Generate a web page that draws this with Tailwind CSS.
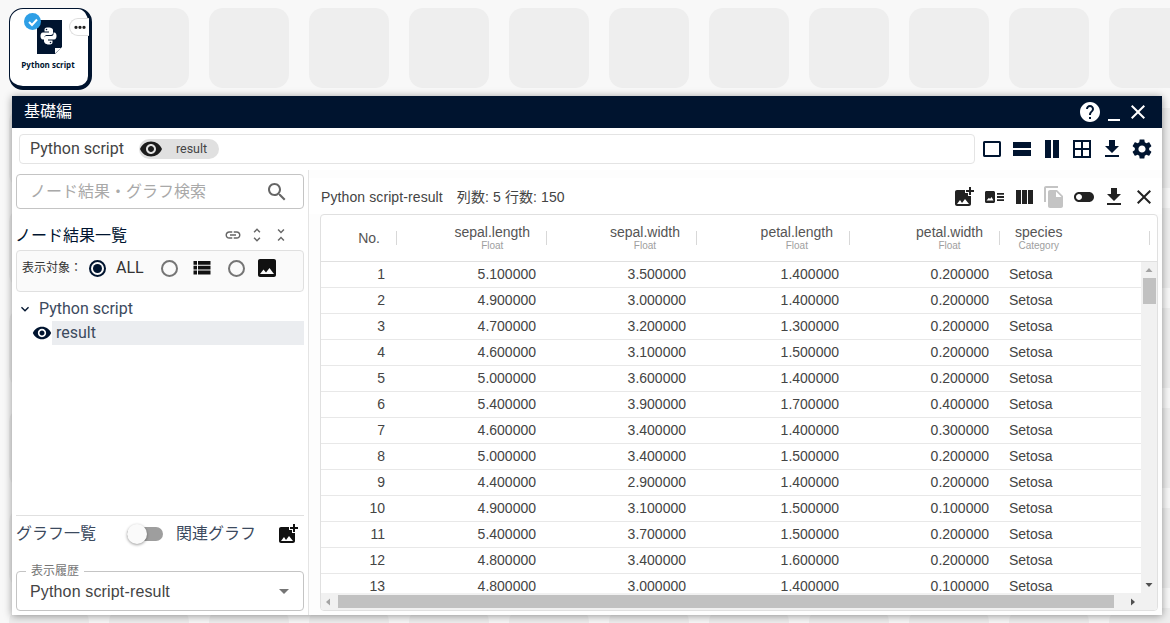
<!DOCTYPE html>
<html lang="ja">
<head>
  <meta charset="UTF-8">
  <title>基礎編</title>
  <script src="https://cdn.jsdelivr.net/npm/@tailwindcss/browser@4"></script>
</head>
<body class="bg-[#f8f8f8] font-['Roboto','Noto_Sans_CJK_JP',sans-serif]">
  <div class="relative h-[623px] w-[1170px] overflow-hidden">
    <!-- node tiles -->
    <div id="tiles" class="grid grid-cols-[repeat(12,80px)] auto-rows-[80px] gap-x-5 gap-y-5 pl-[9px] pt-2"></div>

    <!-- selected node -->
    <div class="absolute left-[9px] top-2 h-[82px] w-[83px] rounded-[14px] border border-[#00142f] border-r-[4px] border-b-[4px] bg-white">
      <svg class="absolute left-[27px] top-[11px]" width="25" height="34" viewBox="0 0 25 34">
        <path fill="#00142f" d="M0 0h25v27l-7 7H0z"/>
        <path fill="#fff" d="M18 28h6l-6 5.500z"/>
        <g transform="translate(-2 -0.5)">
          <path fill="#fff" d="M13 8c-3.500 0-3.500 1.500-3.500 2.500V12H14v1H8c-2 0-2.500 2-2.500 3.500S6 20 8 20h1.500v-2.500c0-1 1-2 2-2h4.500c1 0 2-1 2-2v-3c0-1-1-2.500-5-2.500zm-1.500 1.200a.8.800 0 1 1 0 1.600.8.800 0 0 1 0-1.600z"/>
          <path fill="#fff" d="M14 25c3.500 0 3.500-1.500 3.500-2.500V21H13v-1h6c2 0 2.500-2 2.500-3.500S21 13 19 13h-.5v1.500c0 1-1 2-2 2H11c-1 0-2 1-2 2v3c0 1 1 3.500 5 3.500zm1.500-1.200a.8.800 0 1 1 0-1.600.8.800 0 0 1 0 1.600z"/>
        </g>
      </svg>
      <span class="absolute left-[14px] top-[4px] flex size-[17px] items-center justify-center rounded-full bg-[#2e9fe6]">
        <svg width="12" height="12" viewBox="0 0 24 24"><path fill="none" stroke="#fff" stroke-width="4" d="M4 12l6 6L20 7"/></svg>
      </span>
      <span class="absolute left-[59px] top-[9px] flex h-[18px] w-[20px] items-center justify-center rounded-l-full border border-r-0 border-[#dddddd] bg-white">
        <svg width="16" height="16" viewBox="0 0 24 24"><path fill="#222" d="M6 10a2.500 2.500 0 1 0 0 5 2.500 2.500 0 0 0 0-5zm6 0a2.500 2.500 0 1 0 0 5 2.500 2.500 0 0 0 0-5zm6 0a2.500 2.500 0 1 0 0 5 2.500 2.500 0 0 0 0-5z"/></svg>
      </span>
      <span class="absolute inset-x-0 top-[50px] pr-[2px] text-center font-['Open_Sans',sans-serif] text-[8px] font-bold text-[#00142f]">Python script</span>
    </div>

    <!-- window -->
    <div class="absolute left-3 top-24 flex h-[519px] w-[1150px] flex-col bg-white shadow-[0_1px_8px_rgba(0,0,0,0.4)]">
      <div class="flex h-8 shrink-0 items-center justify-between bg-[#00142f] pl-3 pr-[12px] text-white">
        <span class="-mt-[1px] text-base">基礎編</span>
        <div class="flex items-center">
          <svg class="size-6" viewBox="0 0 24 24"><path fill="#fff" d="M12 2C6.480 2 2 6.480 2 12s4.480 10 10 10 10-4.480 10-10S17.520 2 12 2zm1 17h-2v-2h2v2zm2.070-7.750l-.9.920C13.450 12.900 13 13.500 13 15h-2v-.5c0-1.100.45-2.100 1.170-2.830l1.240-1.260c.37-.36.59-.86.59-1.410 0-1.100-.9-2-2-2s-2 .9-2 2H8c0-2.210 1.790-4 4-4s4 1.790 4 4c0 .88-.36 1.680-.93 2.250z"/></svg>
          <svg class="size-6" viewBox="0 0 24 24"><path fill="#fff" d="M6 19h12v2H6z"/></svg>
          <svg class="size-6" viewBox="0 0 24 24"><path fill="#fff" d="M19 6.410L17.590 5 12 10.590 6.410 5 5 6.410 10.590 12 5 17.590 6.410 19 12 13.410 17.590 19 19 17.590 13.410 12z"/></svg>
        </div>
      </div>

      <div class="flex h-[42px] shrink-0 items-center pl-[7px] pr-[6px]">
        <div class="flex h-[30px] w-[956px] items-center rounded border border-[#e4e4e4] pl-[10px]">
          <span class="text-base text-[#444444]">Python script</span>
          <span class="ml-[15px] flex h-[20px] w-[80px] items-center rounded-full bg-[#e0e0e0]">
            <svg class="size-[24px] shrink-0" viewBox="0 0 24 24"><path fill="#1b1b1b" d="M12 4.500C7 4.500 2.730 7.610 1 12c1.730 4.390 6 7.500 11 7.500s9.270-3.110 11-7.500c-1.730-4.390-6-7.500-11-7.500zM12 17c-2.760 0-5-2.240-5-5s2.240-5 5-5 5 2.240 5 5-2.240 5-5 5zm0-8c-1.660 0-3 1.340-3 3s1.340 3 3 3 3-1.340 3-3-1.340-3-3-3z"/></svg>
            <span class="ml-[13px] mt-[1px] text-[12.500px] text-[#444444]">result</span>
          </span>
        </div>
        <div class="ml-[5px] flex items-center gap-[6px]">
          <svg class="size-6" viewBox="0 0 24 24"><path fill="#00142f" d="M18 4H4.500C3.400 4 3 4.900 3 6v12c0 1.100.4 2 1.500 2H19.500c1.100 0 1.500-.9 1.500-2V6c0-1.100-.4-2-1.500-2zm1 14H5V6h14v12z"/></svg>
          <svg class="size-6" viewBox="0 0 24 24"><path fill="#00142f" d="M3 13h18v6H3zM3 5h18v6H3z"/></svg>
          <svg class="size-6" viewBox="0 0 24 24"><path fill="#00142f" d="M5 3h6v18H5zM13 3h6v18h-6z"/></svg>
          <svg class="size-6" viewBox="0 0 24 24"><path fill="#00142f" d="M3 3v18h18V3H3zm8 16H5v-6h6v6zm0-8H5V5h6v6zm8 8h-6v-6h6v6zm0-8h-6V5h6v6z"/></svg>
          <svg class="size-6" viewBox="0 0 24 24"><path fill="#00142f" d="M19 9h-4V3H9v6H5l7 7 7-7zM5 18v2h14v-2H5z"/></svg>
          <svg class="size-6" viewBox="0 0 24 24"><path fill="#00142f" d="M19.140 12.940c.04-.3.06-.61.06-.94 0-.32-.02-.64-.07-.94l2.030-1.580c.18-.14.23-.41.12-.61l-1.920-3.320c-.12-.22-.37-.29-.59-.22l-2.390.96c-.5-.38-1.030-.7-1.620-.94l-.36-2.540c-.04-.24-.24-.41-.48-.41h-3.840c-.24 0-.43.17-.47.41l-.36 2.540c-.59.24-1.130.57-1.620.94l-2.390-.96c-.22-.08-.47 0-.59.22L2.740 8.870c-.12.21-.08.47.12.61l2.030 1.580c-.05.3-.09.63-.09.94s.02.64.07.94l-2.030 1.580c-.18.14-.23.41-.12.61l1.920 3.320c.12.22.37.29.59.22l2.390-.96c.5.38 1.030.7 1.620.94l.36 2.540c.05.24.24.41.48.41h3.840c.24 0 .44-.17.47-.41l.36-2.540c.59-.24 1.130-.56 1.620-.94l2.390.96c.22.08.47 0 .59-.22l1.920-3.320c.12-.22.07-.47-.12-.61l-2.010-1.580zM12 15.600c-1.980 0-3.600-1.620-3.600-3.600s1.620-3.600 3.600-3.600 3.600 1.620 3.600 3.600-1.620 3.600-3.600 3.600z"/></svg>
        </div>
      </div>

      <div class="flex min-h-0 flex-1">
        <!-- left panel -->
        <div class="flex w-[297px] shrink-0 flex-col border-r border-[#e4e4e4] pb-1 pl-1 pr-1">
          <div class="mt-1 flex h-[35px] w-[288px] items-center justify-between rounded border border-[#c4c4c4] pl-[13px] pr-[14px]">
            <span class="text-[16px] text-[#a9a9a9]">ノード結果・グラフ検索</span>
            <svg class="size-6" viewBox="0 0 24 24"><path fill="#666666" d="M15.500 14h-.79l-.28-.27C15.410 12.590 16 11.110 16 9.500 16 5.910 13.090 3 9.500 3S3 5.910 3 9.500 5.910 16 9.500 16c1.610 0 3.090-.59 4.230-1.570l.27.28v.79l5 4.990L20.490 19l-4.990-5zm-6 0C7.010 14 5 11.990 5 9.500S7.010 5 9.500 5 14 7.010 14 9.500 11.990 14 9.500 14z"/></svg>
          </div>
          <div class="mt-[15px] flex h-[24px] w-[288px] items-center justify-between pr-[14px]">
            <span class="-ml-[1px] text-base text-[#00142f]">ノード結果一覧</span>
            <div class="-mt-[3px] flex items-center gap-[6px]">
              <svg class="size-[18px]" viewBox="0 0 24 24"><path fill="#666666" d="M3.900 12c0-1.710 1.390-3.100 3.100-3.100h4V7H7c-2.760 0-5 2.240-5 5s2.240 5 5 5h4v-1.900H7c-1.710 0-3.100-1.390-3.100-3.100zM8 13h8v-2H8v2zm9-6h-4v1.900h4c1.710 0 3.100 1.390 3.100 3.100s-1.390 3.100-3.100 3.100h-4V17h4c2.760 0 5-2.240 5-5s-2.240-5-5-5z"/></svg>
              <svg class="size-[18px]" viewBox="0 0 24 24"><path fill="#666666" d="M12 5.830L15.170 9l1.410-1.410L12 3 7.410 7.590 8.830 9 12 5.830zm0 12.340L8.830 15l-1.410 1.410L12 21l4.590-4.590L15.170 15 12 18.170z"/></svg>
              <svg class="size-[18px]" viewBox="0 0 24 24"><path fill="#666666" d="M7.410 18.590L8.830 20 12 16.830 15.170 20l1.410-1.410L12 14l-4.590 4.590zm9.180-13.180L15.170 4 12 7.170 8.830 4 7.410 5.410 12 10l4.590-4.590z"/></svg>
            </div>
          </div>
          <div class="mt-[2px] flex h-[42px] w-[288px] items-center rounded border border-[#e0e0e0] bg-[#fafafa] pb-[6px] pl-[5px]">
            <span class="text-xs text-[#333333]">表示対象：</span>
            <span class="ml-[7px] flex size-[17px] items-center justify-center rounded-full border-2 border-[#00142f]"><span class="size-[9px] rounded-full bg-[#00142f]"></span></span>
            <span class="ml-[10px] text-base text-[#333333]">ALL</span>
            <span class="ml-[17px] size-[17px] rounded-full border-2 border-[#757575]"></span>
            <svg class="ml-[14px] size-5" viewBox="0 0 20 20"><path fill="#111111" d="M1.500 3h3.500v3.800H1.500zM6 3h12.500v3.800H6zM1.500 7.800h3.500v3.800H1.500zM6 7.800h12.500v3.800H6zM1.500 12.600h3.500v3.900H1.500zM6 12.600h12.500v3.900H6z"/></svg>
            <span class="ml-[16px] size-[17px] rounded-full border-2 border-[#757575]"></span>
            <svg class="ml-[13px] size-[18px]" viewBox="3 3 18 18"><path fill="#111111" d="M21 19V5c0-1.100-.9-2-2-2H5c-1.100 0-2 .9-2 2v14c0 1.100.9 2 2 2h14c1.100 0 2-.9 2-2zM8.500 13.500l2.500 3.010L14.500 12l4.500 6H5l3.500-4.500z"/></svg>
          </div>
          <div class="mt-[4px] flex h-[25px] items-center pl-[1px]">
            <svg class="size-[16px]" viewBox="0 0 24 24"><path fill="#00142f" d="M16.590 8.590L12 13.170 7.410 8.590 6 10l6 6 6-6z"/></svg>
            <span class="ml-[6px] text-base text-[#3c4a5e]">Python script</span>
          </div>
          <div class="flex h-6 w-[288px] items-center pl-[16px]">
            <svg class="size-[20px] shrink-0" viewBox="0 0 24 24"><path fill="#00142f" d="M12 4.500C7 4.500 2.730 7.610 1 12c1.730 4.390 6 7.500 11 7.500s9.270-3.110 11-7.500c-1.730-4.390-6-7.500-11-7.500zM12 17c-2.760 0-5-2.240-5-5s2.240-5 5-5 5 2.240 5 5-2.240 5-5 5zm0-8c-1.660 0-3 1.340-3 3s1.340 3 3 3 3-1.340 3-3-1.340-3-3-3z"/></svg>
            <span class="flex h-6 flex-1 items-center bg-[#ebedf0] pl-[4px] text-base text-[#3c4a5e]">result</span>
          </div>

          <div class="mt-auto w-[288px] border-t border-[#e0e0e0]">
            <div class="flex h-[35px] items-center">
              <span class="text-base text-[#3c4a5e]">グラフ一覧</span>
              <span class="relative ml-[31px] h-[14px] w-[36px] rounded-full bg-[#9e9e9e]">
                <span class="absolute -top-[3px] left-0 size-5 rounded-full bg-[#fafafa] shadow-[0_1px_3px_rgba(0,0,0,0.4)]"></span>
              </span>
              <span class="ml-[13px] text-base text-[#3c4a5e]">関連グラフ</span>
              <svg class="ml-[20px] size-6" viewBox="0 0 24 24"><path fill="#111111" d="M19 7v2.990s-1.990.01-2 0V7h-3s.01-1.990 0-2h3V2h2v3h3v2h-3zm-3 4V8h-3V5H5c-1.100 0-2 .9-2 2v12c0 1.100.9 2 2 2h12c1.100 0 2-.9 2-2v-8h-3zM5 19l3-4 2 3 3-4 4 5H5z"/></svg>
            </div>
            <div class="relative mt-[20px] flex h-[40px] items-center justify-between rounded border border-[#c4c4c4] pl-[13px] pr-[7px]">
              <span class="absolute -top-[8px] left-[9px] bg-white px-[5px] text-[12px] leading-[14px] text-[#757575]">表示履歴</span>
              <span class="mt-[1px] font-['Liberation_Sans',sans-serif] text-base tracking-[0.15px] text-[#444444]">Python script-result</span>
              <svg class="size-6" viewBox="0 0 24 24"><path fill="#757575" d="M7 10l5 5 5-5z"/></svg>
            </div>
          </div>
        </div>

        <!-- result panel -->
        <div class="flex min-w-0 flex-1 flex-col bg-[#fdfdfd]">
          <div class="mt-2 flex h-[36px] shrink-0 items-center justify-between bg-white pl-3 pr-[6px] pt-[2px]">
            <span class="font-['Liberation_Sans','Noto_Sans_CJK_JP',sans-serif] text-sm tracking-[0.1px] text-[#444444]">Python script-result<span class="ml-[14px]">列数: 5 行数: 150</span></span>
            <div class="flex items-center gap-[6px]">
              <svg class="size-6" viewBox="0 0 24 24"><path fill="#222222" d="M19 7v2.990s-1.990.01-2 0V7h-3s.01-1.990 0-2h3V2h2v3h3v2h-3zm-3 4V8h-3V5H5c-1.100 0-2 .9-2 2v12c0 1.100.9 2 2 2h12c1.100 0 2-.9 2-2v-8h-3zM5 19l3-4 2 3 3-4 4 5H5z"/></svg>
              <svg class="size-6" viewBox="0 0 24 24"><path fill="#222222" d="M3 7.500c0-.8.6-1.500 1.500-1.500h7c.8 0 1.500.7 1.500 1.500v9c0 .8-.7 1.500-1.500 1.500h-7c-.9 0-1.500-.7-1.500-1.500zM4.500 15.500h7L9.500 12 8 14l-1-1.200zM15 8h7v1.800h-7zM15 11.100h7v1.800h-7zM15 14.200h7V16h-7z" fill-rule="evenodd"/></svg>
              <svg class="size-6" viewBox="0 0 24 24"><path fill="#222222" d="M10 19h5V5h-5v14zm-6 0h5V5H4v14zM16 5v14h5V5h-5z"/></svg>
              <svg class="size-6" viewBox="0 0 24 24"><path fill="#c4c4c4" d="M16 1H4c-1.100 0-2 .9-2 2v14h2V3h12V1zm-1 4l6 6v10c0 1.100-.9 2-2 2H7.990C6.890 23 6 22.100 6 21l.01-14c0-1.100.89-2 1.990-2h7zm-1 7h5.500L14 6.500V12z"/></svg>
              <svg class="size-6" viewBox="0 0 24 24"><path fill="#222222" d="M17 7H7c-2.760 0-5 2.240-5 5s2.240 5 5 5h10c2.760 0 5-2.240 5-5s-2.240-5-5-5zM7 15c-1.660 0-3-1.340-3-3s1.340-3 3-3 3 1.340 3 3-1.340 3-3 3z"/></svg>
              <svg class="size-6" viewBox="0 0 24 24"><path fill="#222222" d="M19 9h-4V3H9v6H5l7 7 7-7zM5 18v2h14v-2H5z"/></svg>
              <svg class="size-6" viewBox="0 0 24 24"><path fill="#222222" d="M19 6.410L17.590 5 12 10.590 6.410 5 5 6.410 10.590 12 5 17.590 6.410 19 12 13.410 17.590 19 19 17.590 13.410 12z"/></svg>
            </div>
          </div>

          <div class="relative ml-[11px] mr-1 h-[397px] overflow-hidden rounded border border-[#e0e0e0] bg-white font-['Liberation_Sans',sans-serif]">
            <div class="grid h-[47px] grid-cols-[76px_150px_150px_153px_150px_150px] border-b border-[#e0e0e0]">
              <div class="flex items-center justify-end"><span class="mr-[16px] text-sm text-[#555555]">No.</span><span class="h-[14px] w-px bg-[#d8d8d8]"></span></div>
              <div class="flex items-center justify-end"><span class="mr-[16px] text-center leading-none"><span class="block text-sm leading-[15px] text-[#555555]">sepal.length</span><span class="block text-[10px] leading-[11px] text-[#9e9e9e]">Float</span></span><span class="h-[14px] w-px bg-[#d8d8d8]"></span></div>
              <div class="flex items-center justify-end"><span class="mr-[16px] text-center leading-none"><span class="block text-sm leading-[15px] text-[#555555]">sepal.width</span><span class="block text-[10px] leading-[11px] text-[#9e9e9e]">Float</span></span><span class="h-[14px] w-px bg-[#d8d8d8]"></span></div>
              <div class="flex items-center justify-end"><span class="mr-[16px] text-center leading-none"><span class="block text-sm leading-[15px] text-[#555555]">petal.length</span><span class="block text-[10px] leading-[11px] text-[#9e9e9e]">Float</span></span><span class="h-[14px] w-px bg-[#d8d8d8]"></span></div>
              <div class="flex items-center justify-end"><span class="mr-[16px] text-center leading-none"><span class="block text-sm leading-[15px] text-[#555555]">petal.width</span><span class="block text-[10px] leading-[11px] text-[#9e9e9e]">Float</span></span><span class="h-[14px] w-px bg-[#d8d8d8]"></span></div>
              <div class="flex items-center justify-between pl-[15px]"><span class="text-center leading-none"><span class="block text-sm leading-[15px] text-[#555555]">species</span><span class="block text-[10px] leading-[11px] text-[#9e9e9e]">Category</span></span><span class="h-[14px] w-px bg-[#d8d8d8]"></span></div>
            </div>
            <div id="rows"></div>

            <!-- scrollbars -->
            <div class="absolute bottom-[17px] right-0 top-[47px] flex w-[16px] flex-col items-center bg-[#f1f1f1]">
              <svg class="mt-[5px]" width="8" height="6" viewBox="0 0 8 6"><path fill="#a3a3a3" d="M4 1l3.500 4H.5z"/></svg>
              <span class="mt-[5px] h-[26px] w-[13px] bg-[#c1c1c1]"></span>
              <svg class="mt-auto mb-[5px]" width="8" height="6" viewBox="0 0 8 6"><path fill="#505050" d="M4 5L.5 1h7z"/></svg>
            </div>
            <div class="absolute bottom-0 left-0 right-0 flex h-[17px] items-center bg-[#f1f1f1]">
              <svg class="ml-[4px]" width="6" height="8" viewBox="0 0 6 8"><path fill="#a3a3a3" d="M1 4l4-3.500v7z"/></svg>
              <span class="ml-[7px] h-[13px] w-[776px] bg-[#c1c1c1]"></span>
              <svg class="ml-[16px]" width="6" height="8" viewBox="0 0 6 8"><path fill="#505050" d="M5 4L1 .5v7z"/></svg>
            </div>
          </div>
        </div>
      </div>
    </div>
  </div>

  <script>
    // background tiles behind the window
    var tiles = document.getElementById('tiles');
    for (var i = 0; i < 84; i++) {
      var t = document.createElement('div');
      t.className = 'rounded-[14px] bg-[#eeeeee]';
      tiles.appendChild(t);
    }

    var data = [
      ['5.100000','3.500000','1.400000','0.200000'],
      ['4.900000','3.000000','1.400000','0.200000'],
      ['4.700000','3.200000','1.300000','0.200000'],
      ['4.600000','3.100000','1.500000','0.200000'],
      ['5.000000','3.600000','1.400000','0.200000'],
      ['5.400000','3.900000','1.700000','0.400000'],
      ['4.600000','3.400000','1.400000','0.300000'],
      ['5.000000','3.400000','1.500000','0.200000'],
      ['4.400000','2.900000','1.400000','0.200000'],
      ['4.900000','3.100000','1.500000','0.100000'],
      ['5.400000','3.700000','1.500000','0.200000'],
      ['4.800000','3.400000','1.600000','0.200000'],
      ['4.800000','3.000000','1.400000','0.100000']
    ];
    var rows = document.getElementById('rows');
    data.forEach(function (d, i) {
      var html = '<div class="grid h-[26px] grid-cols-[76px_150px_150px_153px_150px_150px] items-center border-b border-[#e8e8e8] pb-[2px] text-sm text-[#444444]">';
      html += '<span class="pr-[12px] text-right">' + (i + 1) + '</span>';
      d.forEach(function (v) { html += '<span class="pr-[11px] text-right">' + v + '</span>'; });
      html += '<span class="pl-[9px]">Setosa</span></div>';
      rows.insertAdjacentHTML('beforeend', html);
    });
  </script>
</body>
</html>
